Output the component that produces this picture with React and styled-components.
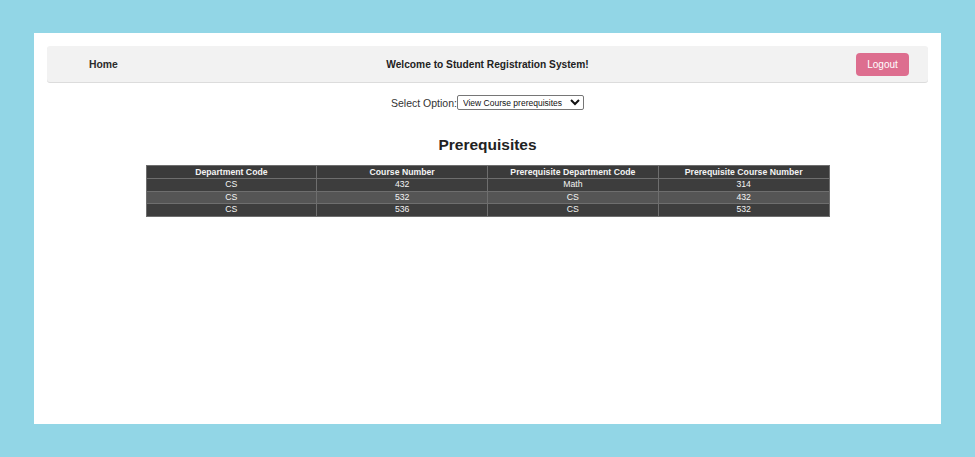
import React from "react";
import styled, { createGlobalStyle } from "styled-components";

const Global = createGlobalStyle`
  html, body { margin: 0; padding: 0; }
  body {
    background: #92d6e6;
    font-family: "Liberation Sans", Arial, sans-serif;
    width: 975px;
    height: 457px;
    overflow: hidden;
  }
`;

const Frame = styled.div`
  padding: 33px 34px;
  box-sizing: border-box;
  width: 975px;
  height: 457px;
`;

const Panel = styled.div`
  background: #ffffff;
  height: 391px;
  padding: 13px;
  box-sizing: border-box;
`;

const Nav = styled.nav`
  display: grid;
  grid-template-columns: 1fr auto 1fr;
  align-items: center;
  height: 36px;
  background: #f2f2f2;
  border-radius: 3px;
  box-shadow: 0 1px 0 #dcdcdc;
  padding: 0 19px;
  box-sizing: border-box;
`;

const NavLink = styled.a`
  justify-self: start;
  margin-left: 23px;
  font-size: 10.4px;
  font-weight: bold;
  color: #2b2b2b;
  text-decoration: none;
`;

const Title = styled.div`
  font-size: 10.2px;
  font-weight: bold;
  color: #222;
`;

const LogoutButton = styled.button`
  justify-self: end;
  width: 53px;
  height: 23px;
  border: none;
  border-radius: 4px;
  background: #dd6e8f;
  color: #fff;
  font-family: "Liberation Sans", Arial, sans-serif;
  font-size: 10px;
  padding: 0;
`;

const SelectRow = styled.div`
  display: flex;
  justify-content: center;
  align-items: center;
  margin-top: 13px;
  font-size: 10.5px;
  color: #333;
`;

const Select = styled.select`
  width: 127px;
  height: 15px;
  font-size: 8.5px;
  font-family: "Liberation Sans", Arial, sans-serif;
  padding: 0 1px;
  border: 1px solid #767676;
  border-radius: 2px;
  background: #fff;
  color: #111;
`;

const Heading = styled.h2`
  margin: 26px 0 11px;
  text-align: center;
  font-size: 15.5px;
  font-weight: bold;
  color: #222;
`;

const Table = styled.table`
  margin: 0 auto;
  width: 684px;
  border-collapse: collapse;
  table-layout: fixed;
  border: 1px solid #8a8a8a;
  font-size: 8.7px;
  color: #f4f4f4;
`;

const Th = styled.th`
  background: #3b3b3b;
  border: 1px solid #6e6e6e;
  height: 12px;
  padding: 0;
  font-weight: bold;
  line-height: 12px;
`;

const Tr = styled.tr`
  background: ${(p) => (p.$alt ? "#555555" : "#3d3d3d")};
`;

const Td = styled.td`
  border: 1px solid #6e6e6e;
  height: 11.5px;
  padding: 0;
  line-height: 11.5px;
  text-align: center;
`;

const rows = [
  ["CS", "432", "Math", "314"],
  ["CS", "532", "CS", "432"],
  ["CS", "536", "CS", "532"],
];

export default function App() {
  return (
    <>
      <Global />
      <Frame>
        <Panel>
          <Nav>
            <NavLink href="#">Home</NavLink>
            <Title>Welcome to Student Registration System!</Title>
            <LogoutButton>Logout</LogoutButton>
          </Nav>
          <SelectRow>
            <span>Select Option:</span>
            <Select defaultValue="prereq">
              <option value="prereq">View Course prerequisites</option>
            </Select>
          </SelectRow>
          <Heading>Prerequisites</Heading>
          <Table>
            <thead>
              <tr>
                <Th>Department Code</Th>
                <Th>Course Number</Th>
                <Th>Prerequisite Department Code</Th>
                <Th>Prerequisite Course Number</Th>
              </tr>
            </thead>
            <tbody>
              {rows.map((r, i) => (
                <Tr key={i} $alt={i === 1}>
                  {r.map((c, j) => (
                    <Td key={j}>{c}</Td>
                  ))}
                </Tr>
              ))}
            </tbody>
          </Table>
        </Panel>
      </Frame>
    </>
  );
}
